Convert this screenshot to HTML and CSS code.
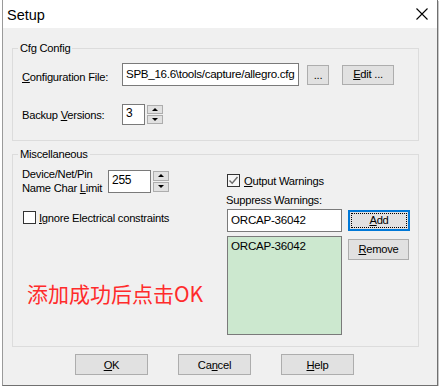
FILE: index.html
```html
<!DOCTYPE html>
<html lang="en">
<head>
	<meta charset="UTF-8">
	<title>Setup</title>
	<link rel="stylesheet" href="styles.css">
</head>
<body>

	<div class="window">
		<!-- title bar -->
		<div class="titlebar">
			<span class="title">Setup</span>
			<svg class="close" width="12" height="12" viewBox="0 0 12 12">
				<path d="M0.5 0.5 L11.5 11.5 M11.5 0.5 L0.5 11.5" stroke="#000" stroke-width="1.1" fill="none"/>
			</svg>
		</div>

		<div class="dlgbody">
			<!-- Cfg config group -->
			<fieldset class="group cfg">
				<legend>Cfg Config</legend>
				<div class="row filerow">
					<span class="label lbl-file"><u>C</u>onfiguration File:</span>
					<div class="edit file">SPB_16.6\tools/capture/allegro.cfg</div>
					<button class="btn dots">...</button>
					<button class="btn editbtn"><u>E</u>dit ...</button>
				</div>
				<div class="row backuprow">
					<span class="label lbl-file">Backup <u>V</u>ersions:</span>
					<div class="spin small">
						<div class="edit">3</div>
						<div class="arrows">
							<span class="arr"><i class="up"></i></span>
							<span class="arr"><i class="down"></i></span>
						</div>
					</div>
				</div>
			</fieldset>

			<!-- Misc group -->
			<fieldset class="group misc">
				<legend>Miscellaneous</legend>
				<div class="cols">
					<div class="leftcol">
						<div class="row limitrow">
							<span class="label twoline">Device/Net/Pin<br>Name Char <u>L</u>imit</span>
							<div class="spin big">
								<div class="edit">255</div>
								<div class="arrows">
									<span class="arr"><i class="up"></i></span>
									<span class="arr"><i class="down"></i></span>
								</div>
							</div>
						</div>
						<label class="check ignore">
							<span class="box"></span>
							<span><u>I</u>gnore Electrical constraints</span>
						</label>
						<div class="note">添加成功后点击OK</div>
					</div>

					<div class="rightcol">
						<label class="check output">
							<span class="box">
								<svg width="11" height="11" viewBox="0 0 11 11">
									<path d="M1.5 5.5 L4.2 8.3 L9.5 2" stroke="#6b6b6b" stroke-width="1.4" fill="none"/>
								</svg>
							</span>
							<span><u>O</u>utput Warnings</span>
						</label>
						<div class="label suppress">Suppress Warnings:</div>
						<div class="row addrow">
							<div class="edit warn">ORCAP-36042</div>
							<button class="btn side focus"><span><u>A</u>dd</span></button>
						</div>
						<div class="row listrow">
							<div class="listbox">ORCAP-36042</div>
							<button class="btn side remove"><u>R</u>emove</button>
						</div>
					</div>
				</div>
			</fieldset>

			<!-- dialog buttons -->
			<div class="footer">
				<button class="btn foot"><u>O</u>K</button>
				<button class="btn foot">Ca<u>n</u>cel</button>
				<button class="btn foot"><u>H</u>elp</button>
			</div>
		</div>
	</div>

</body>
</html>
```

FILE: styles.css
```css
:root{
	--face: #f0f0f0;
	--btnface: #e1e1e1;
	--btnborder: #adadad;
	--editborder: #7a7a7a;
	--groupline: #dcdcdc;
	--uifont: "Liberation Sans", Arial, sans-serif;
}
*{
	box-sizing: border-box;
}
body {
	margin: 0;
	background-color: #fff;
	font-family: var(--uifont);
	font-size: 11.2px;
	letter-spacing: -0.25px;
	color: #000;
}
u {
	text-decoration: underline;
	text-underline-offset: 1px;
}

.window {
	margin-left: 2px;
	width: 436px;
	height: 386px;
	border-left: 1px solid #9a9a9a;
	border-right: 1px solid #707070;
	border-bottom: 1px solid #707070;
	background-color: var(--face);
	box-shadow: 1px 1px 0 #c8c8c8;
}

.titlebar {
	height: 28px;
	background-color: #fff;
	display: flex;
	align-items: center;
	justify-content: space-between;
	padding: 0 9px 0 4px;
}
.titlebar .title {
	font-size: 14.5px;
	letter-spacing: 0;
	padding-top: 1px;
}

.dlgbody {
	padding-top: 13px;
}

/* group boxes */
.group {
	margin: 0 18px 0 9px;
	border: 1px solid var(--groupline);
	padding: 0 0 0 9px;
	min-width: 0;
}
.group legend {
	padding: 0 2px;
	margin-left: -4px;
	line-height: 14px;
}
.cfg {
	padding-top: 8px;
	padding-bottom: 15px;
}
.misc {
	margin-top: 6px;
	padding-top: 6px;
	padding-bottom: 11px;
}

.row {
	display: flex;
	align-items: center;
}
.label {
	line-height: 15px;
	white-space: nowrap;
}
.lbl-file {
	width: 100px;
}
.filerow .lbl-file {
	margin-top: 6px;
}
.backuprow {
	margin-top: 18px;
}
.backuprow .lbl-file {
	margin-top: 1px;
}

/* edit fields */
.edit {
	background-color: #fff;
	border: 1px solid var(--editborder);
	padding: 0 3px;
	line-height: 19px;
	white-space: nowrap;
	overflow: hidden;
	font-size: 11.6px;
}
.edit.file {
	width: 177px;
	height: 23px;
	line-height: 20px;
	letter-spacing: -0.3px;
}

.btn {
	font-family: var(--uifont);
	font-size: 11.2px;
	letter-spacing: -0.25px;
	color: #000;
	background-color: var(--btnface);
	border: 1px solid var(--btnborder);
	padding: 0;
	height: 20px;
	line-height: 17px;
}
.dots {
	width: 22px;
	margin-left: 8px;
	line-height: 16px;
}
.editbtn {
	width: 52px;
	margin-left: 13px;
}

/* spin boxes */
.spin {
	display: flex;
}
.spin .edit {
	line-height: 17px;
	font-size: 12px;
}
.spin.small .edit {
	width: 23px;
	height: 21px;
}
.spin.big .edit {
	width: 43px;
	height: 23px;
	padding-top: 1px;
}
.arrows {
	display: flex;
	flex-direction: column;
	justify-content: space-between;
	padding: 1px 1px 1px 2px;
	width: 19px;
}
.arr {
	flex: 1;
	display: flex;
	align-items: center;
	justify-content: center;
	background-color: var(--btnface);
	border: 1px solid var(--btnborder);
	margin: 0 0 1px 0;
}
.arr:last-child {
	margin: 0;
}
.arr i {
	width: 0;
	height: 0;
	border-left: 3.5px solid transparent;
	border-right: 3.5px solid transparent;
}
.arr i.up {
	border-bottom: 3.5px solid #000;
}
.arr i.down {
	border-top: 3.5px solid #000;
}

/* misc columns */
.cols {
	display: flex;
}
.leftcol {
	width: 205px;
	flex-shrink: 0;
}
.twoline {
	width: 86px;
	line-height: 14px;
}
.check {
	display: flex;
	align-items: center;
	gap: 3px;
	white-space: nowrap;
}
.check .box {
	width: 13px;
	height: 13px;
	border: 1px solid #333;
	background-color: #fff;
	display: flex;
	align-items: center;
	justify-content: center;
}
.ignore {
	margin-top: 16px;
	margin-left: 1px;
}
.note {
	margin-top: 55px;
	margin-left: 5px;
	font-family: "Noto Sans CJK SC", "Noto Sans", sans-serif;
	font-size: 21px;
	letter-spacing: 0;
	line-height: 28px;
	color: #ff2b2b;
	white-space: nowrap;
}

.rightcol {
	flex: 1;
}
.output {
	margin-top: 7px;
	gap: 4px;
}
.output .box {
	background-color: #f7f7f7;
}
.suppress {
	margin-top: 6px;
	margin-left: -1px;
}
.addrow {
	margin-top: 1px;
}
.edit.warn {
	width: 115px;
	height: 23px;
	line-height: 20px;
}
.side {
	margin-left: 6px;
	width: 61px;
	height: 21px;
}
.focus {
	border: 2px solid #0078d7;
	padding: 1px;
	width: 62px;
}
.focus span {
	display: block;
	height: 100%;
	border: 1px dotted #000;
	line-height: 13px;
}
.listrow {
	margin-top: 4px;
	align-items: flex-start;
}
.listbox {
	width: 115px;
	height: 99px;
	background-color: #cce8cf;
	border: 1px solid var(--editborder);
	padding: 1px 3px;
	line-height: 15px;
	font-size: 11.6px;
}
.remove {
	margin-top: 3px;
}

/* footer buttons */
.footer {
	display: flex;
	gap: 30px;
	padding-left: 72px;
	margin-top: 7px;
}
.foot {
	width: 73px;
	height: 21px;
	line-height: 18px;
}
```
